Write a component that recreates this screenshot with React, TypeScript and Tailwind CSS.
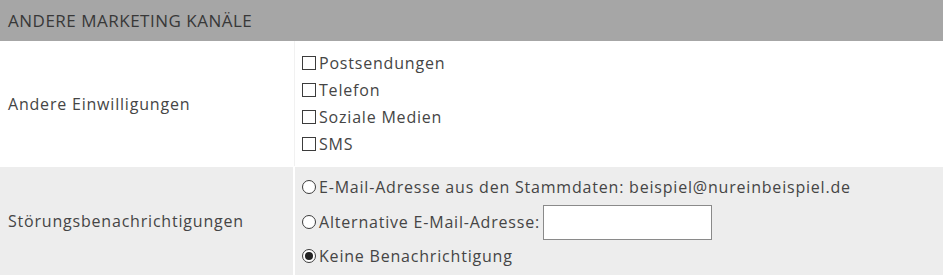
import React from 'react';

const Checkbox = ({ label }: { label: string }) => (
  <label className="flex h-[27px] items-center">
    <span className="mr-[3px] inline-block h-[14px] w-[14px] border border-[#3c3c3c] bg-white" />
    <span>{label}</span>
  </label>
);

const Radio = ({ checked, children, className }: { checked?: boolean; children: React.ReactNode; className: string }) => (
  <label className={`flex items-center ${className}`}>
    <span className="mr-[3px] flex h-[14px] w-[14px] items-center justify-center rounded-full border border-[#3c3c3c] bg-white">
      {checked && <span className="h-[8px] w-[8px] rounded-full bg-[#222]" />}
    </span>
    {children}
  </label>
);

const App = () => {
  const channels = ['Postsendungen', 'Telefon', 'Soziale Medien', 'SMS'];
  return (
    <div className="h-[275px] w-[943px] overflow-hidden bg-white text-[16px] tracking-[0.8px] text-[#454545]" style={{ fontFamily: '"Open Sans", sans-serif' }}>
      <div className="flex h-[41px] items-center bg-[#a6a6a6] px-[8px] text-[17px] tracking-[0.5px] text-[#383838]">
        ANDERE MARKETING KANÄLE
      </div>

      <div className="flex h-[125px] gap-[1px] bg-[#f1f1f1]">
        <div className="flex w-[294px] items-center bg-white px-[8px]">Andere Einwilligungen</div>
        <div className="flex-1 bg-white px-[7px] pt-[8px]">
          {channels.map((c) => (
            <Checkbox key={c} label={c} />
          ))}
        </div>
      </div>

      <div className="flex h-[109px] gap-[2px] border-t border-white bg-white">
        <div className="flex w-[293px] items-center bg-[#ededed] px-[8px]">Störungsbenachrichtigungen</div>
        <div className="flex-1 bg-[#ededed] px-[7px] pt-[5px]">
          <Radio className="h-[30px]">E-Mail-Adresse aus den Stammdaten: beispiel@nureinbeispiel.de</Radio>
          <Radio className="h-[40px]">
            Alternative E-Mail-Adresse:
            <input type="text" className="ml-[3px] h-[35px] w-[169px] border border-[#8a8a8a] bg-white outline-none" />
          </Radio>
          <Radio checked className="h-[28px]">Keine Benachrichtigung</Radio>
        </div>
      </div>
    </div>
  );
};

export default App;
